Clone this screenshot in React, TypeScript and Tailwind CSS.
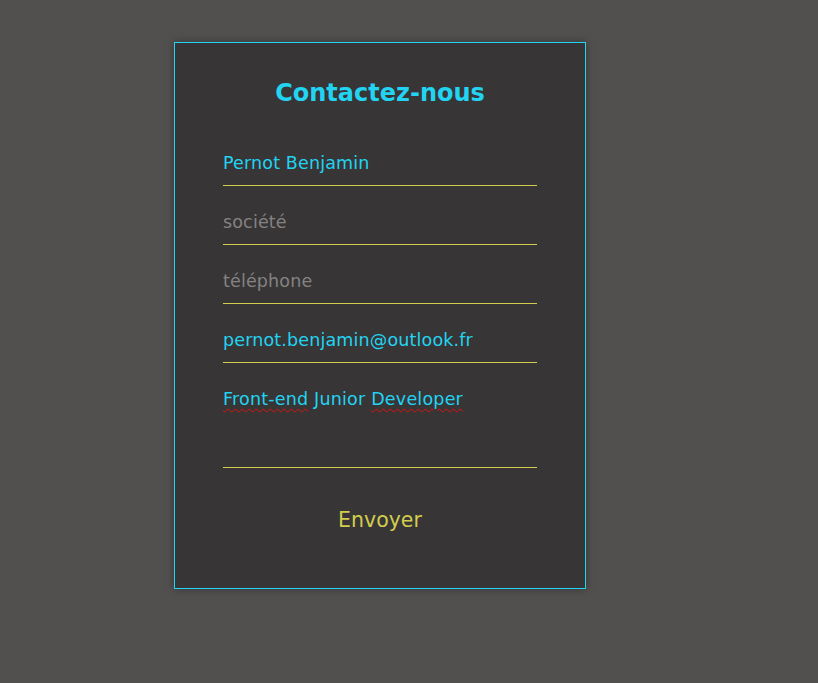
import React from "react";

const font = { fontFamily: '"DejaVu Sans", Verdana, sans-serif' };

export default function App() {
  const inputCls =
    "block w-full h-[41px] bg-transparent border-0 border-b border-[#d2cd4e] outline-none text-[17.5px] tracking-[0.15px] text-[#22d3f2] placeholder:text-[#858282] p-0 pb-[4px]";
  return (
    <div className="min-h-[683px] w-full bg-[#524f4f] pt-[42px] pl-[174px]" style={font}>
      <div className="w-[412px] h-[547px] border border-[#1fd6f6] bg-[#373535] shadow-[0_0_8px_rgba(0,0,0,0.35)] flex flex-col px-[48px] pt-[36px]">
        <h1 className="text-center text-[24px] leading-[28px] font-bold text-[#22d3f2]">Contactez-nous</h1>
        <div className="mt-[38px] flex flex-col gap-[18px]">
          <input className={inputCls} defaultValue="Pernot Benjamin" style={font} />
          <input className={inputCls} placeholder="société" style={font} />
          <input className={inputCls} placeholder="téléphone" style={font} />
          <input className={inputCls} defaultValue="pernot.benjamin@outlook.fr" style={font} />
          <div className="h-[87px] border-b border-[#d2cd4e] pt-[7px] text-[17.5px] tracking-[0.2px] leading-[22px] text-[#22d3f2]">
            <span className="underline decoration-wavy decoration-[#e01010] decoration-1 underline-offset-[3px]">Front-end</span>{" "}
            Junior{" "}
            <span className="underline decoration-wavy decoration-[#e01010] decoration-1 underline-offset-[3px]">Developer</span>
          </div>
        </div>
        <div className="mt-[40px] text-center text-[20.5px] leading-[24px] text-[#d2cd4e]">Envoyer</div>
      </div>
    </div>
  );
}
